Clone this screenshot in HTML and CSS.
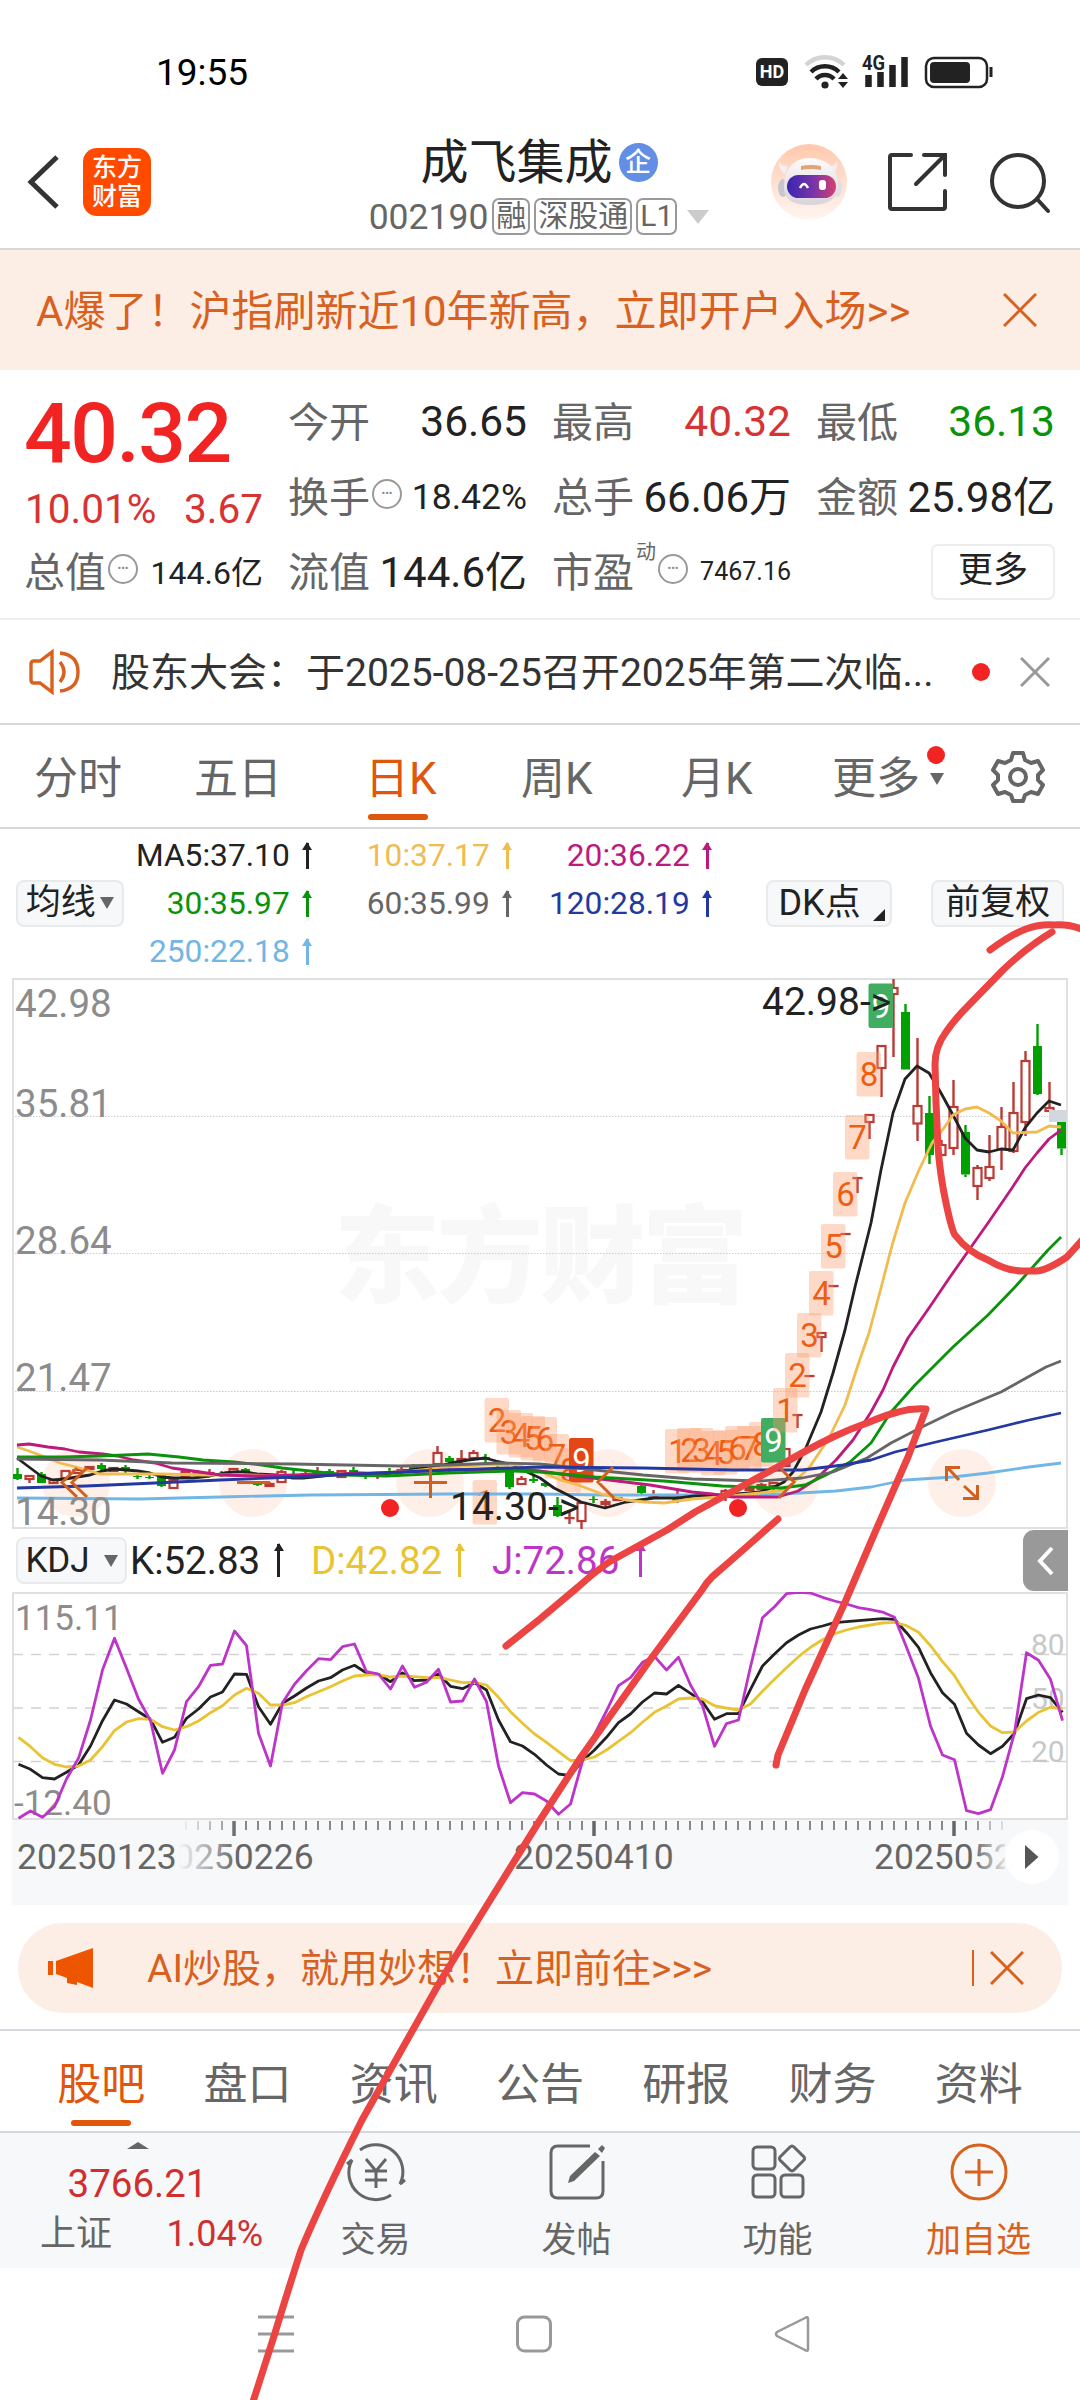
FILE: index.html
```html
<!DOCTYPE html>
<html lang="zh-CN">
<head>
    <meta charset="UTF-8">
    <meta name="viewport" content="width=device-width, initial-scale=1.0">
    <title>成飞集成 002190</title>
    <link rel="stylesheet" href="styles.css">
</head>
<body>
    <div class="phone">
        <div class="status-bar">
            <span class="clock">19:55</span>
            <div class="status-icons">
                <span class="hd">HD</span>
                <svg class="wifi" width="46" height="36" viewBox="0 0 46 36">
                    <g fill="none" stroke-width="4.5">
                        <path d="M2 11a27 27 0 0 1 38 0" stroke="#d4d4d4"/>
                        <path d="M7 18a20 20 0 0 1 28 0" stroke="#222"/>
                        <path d="M12 25a12 12 0 0 1 18 0" stroke="#222"/>
                    </g>
                    <circle cx="21" cy="31" r="3.6" fill="#222"/>
                    <path d="M34 25l5-6 5 6zM34 28h10l-5 6z" fill="#222"/>
                </svg>
                <svg class="signal" width="50" height="36" viewBox="0 0 50 36">
                    <text x="0" y="16" class="net" textLength="23" lengthAdjust="spacingAndGlyphs">4G</text>
                    <path d="M6.500 21v12M18.500 18v15M30.500 11v22M42.500 3v30" stroke="#222" stroke-width="6.500"/>
                </svg>
                <svg width="70" height="34" viewBox="0 0 70 34">
                    <rect x="2" y="3" width="61" height="29" rx="8" fill="none" stroke="#222" stroke-width="2.500"/>
                    <rect x="6" y="7" width="40" height="21" rx="4" fill="#222"/>
                    <path d="M67 12v10" stroke="#222" stroke-width="3"/>
                </svg>
            </div>
        </div>

        <header class="header">
            <svg class="back" width="34" height="56" viewBox="0 0 34 56"><path d="M30 3L4 28l26 25" fill="none" stroke="#333" stroke-width="5"/></svg>
            <div class="logo"><span>东方</span><span>财富</span></div>
            <div class="stock">
                <div class="stock-name">成飞集成<span class="qi">企</span></div>
                <div class="stock-code">002190<span class="tag">融</span><span class="tag">深股通</span><span class="tag">L1</span><i class="caret"></i></div>
            </div>
            <svg class="robot" width="76" height="76" viewBox="0 0 76 76">
                <defs>
                    <linearGradient id="halo" x1="0" y1="0" x2="0" y2="1"><stop offset="0" stop-color="#ffc9ac"/><stop offset="1" stop-color="#fff6f1"/></linearGradient>
                    <linearGradient id="visor" x1="0" y1="0" x2="1" y2="0"><stop offset="0" stop-color="#3a25b0"/><stop offset=".55" stop-color="#7a35a8"/><stop offset="1" stop-color="#d6406d"/></linearGradient>
                    <linearGradient id="shell" x1="0" y1="0" x2="0" y2="1"><stop offset="0" stop-color="#fdfbfb"/><stop offset="1" stop-color="#d9d3da"/></linearGradient>
                </defs>
                <circle cx="38" cy="38" r="38" fill="url(#halo)"/>
                <path d="M8 17q2 6 9 5l-3 8q-7-4-6-13zM66 16q-1 7-8 6l3 8q7-5 5-14z" fill="#f3eef1"/>
                <ellipse cx="12" cy="44" rx="5" ry="9" fill="#c9c5cf"/>
                <ellipse cx="66" cy="44" rx="5" ry="9" fill="#e2dde4"/>
                <path d="M39 14C56 14 68 26 67 43 66 57 54 61 39 61S13 57 13 43C13 25 23 14 39 14z" fill="url(#shell)"/>
                <path d="M30 22q10-2 20 0v4q-10-2-20 0z" fill="#dfa478"/>
                <rect x="16" y="31" width="49" height="23" rx="11.500" fill="url(#visor)"/>
                <path d="M29 44q4-8 8 0" fill="none" stroke="#fff" stroke-width="2.500"/>
                <rect x="48" y="36" width="7" height="10" rx="3" fill="#fff"/>
            </svg>
            <svg class="share" width="64" height="62" viewBox="0 0 64 62"><path d="M25 4H6q-2 0-2 2v50q0 2 2 2h51q2 0 2-2V40M38 4h21v20M58 5L30 33" fill="none" stroke="#333" stroke-width="4" stroke-linecap="round"/></svg>
            <svg class="search" width="64" height="64" viewBox="0 0 64 64"><g fill="none" stroke="#333" stroke-width="4" stroke-linecap="round"><circle cx="30" cy="31" r="26"/><path d="M49 49l11 12"/></g></svg>
        </header>

        <div class="promo">
            <span>A爆了！沪指刷新近10年新高，立即开户入场&gt;&gt;</span>
            <svg width="34" height="34" viewBox="0 0 34 34"><path d="M1 1l32 32M33 1L1 33" stroke="#d8611f" stroke-width="3"/></svg>
        </div>

        <section class="quote">
            <div class="price">
                <div class="last">40.32</div>
                <div class="change"><span>10.01%</span><span>3.67</span></div>
            </div>
            <div class="cell"><label>今开</label><b>36.65</b></div>
            <div class="cell"><label>最高</label><b class="up">40.32</b></div>
            <div class="cell"><label>最低</label><b class="down">36.13</b></div>
            <div class="cell"><label>换手<i class="dots">•••</i></label><b class="mid">18.42%</b></div>
            <div class="cell"><label>总手</label><b class="unit">66.06万</b></div>
            <div class="cell"><label>金额</label><b class="unit">25.98亿</b></div>
            <div class="cell"><label>总值<i class="dots">•••</i></label><b class="unit small">144.6亿</b></div>
            <div class="cell"><label>流值</label><b class="unit">144.6亿</b></div>
            <div class="cell"><label>市盈<sup>动</sup><i class="dots">•••</i></label><b class="tiny">7467.16</b></div>
            <div class="cell cell-end"><span class="more-btn">更多</span></div>
        </section>

        <div class="news">
            <svg class="horn" width="54" height="46" viewBox="0 0 54 46">
                <g fill="none" stroke="#d8611f" stroke-width="3.400">
                    <path d="M24 3v40L12 34H6q-3 0-3-3V15q0-3 3-3h6z"/>
                    <path d="M32 13q8 10 0 20M32 4q18 2 18 19T32 42"/>
                </g>
            </svg>
            <span class="news-text">股东大会：于2025-08-25召开2025年第二次临...</span>
            <i class="red-dot"></i>
            <svg width="30" height="30" viewBox="0 0 30 30"><path d="M1 1l28 28M29 1L1 29" stroke="#999" stroke-width="3"/></svg>
        </div>

        <nav class="periods">
            <span>分时</span>
            <span>五日</span>
            <span class="active">日K</span>
            <span>周K</span>
            <span>月K</span>
            <span class="more">更多<i class="caret-dark"></i><i class="red-dot"></i></span>
            <svg class="gear" width="54" height="54" viewBox="0 0 54 54">
                <g fill="none" stroke="#666" stroke-width="4" stroke-linejoin="round">
                    <path d="M22 3h10l2 7 6 3 7-2 5 9-5 5v5l5 5-5 9-7-2-6 3-2 6H22l-2-6-6-3-7 2-5-9 5-5v-5l-5-5 5-9 7 2 6-3z"/>
                    <circle cx="27" cy="27" r="8"/>
                </g>
            </svg>
        </nav>

        <section class="averages">
            <span class="chip chip-ma">均线<i class="caret-dark"></i></span>
            <div class="ma-grid">
                <span class="ma c5">MA5:37.10<i></i></span>
                <span class="ma c10">10:37.17<i></i></span>
                <span class="ma c20">20:36.22<i></i></span>
                <span class="ma c30">30:35.97<i></i></span>
                <span class="ma c60">60:35.99<i></i></span>
                <span class="ma c120">120:28.19<i></i></span>
                <span class="ma c250">250:22.18<i></i></span>
            </div>
            <span class="chip chip-dk">DK点<i class="corner"></i></span>
            <span class="chip chip-fq">前复权</span>
        </section>

        <svg class="kline" id="kline" width="1080" height="552" viewBox="0 977 1080 552">
            <g class="watermark"><text x="334" y="1294" textLength="414">东方财富</text></g>
            <path class="grid-dots" d="M12 1116.500H1068M12 1253.500H1068M12 1391.500H1068"/>
            <rect class="frame" x="13" y="979" width="1054" height="549"/>
            <g class="tool-circles">
                <circle cx="76" cy="1483" r="34"/><circle cx="253" cy="1483" r="34"/><circle cx="430" cy="1483" r="34"/>
                <circle cx="608" cy="1483" r="34"/><circle cx="785" cy="1483" r="34"/><circle cx="962" cy="1483" r="34"/>
            </g>
            <g id="candles"></g>
            <g id="badges"></g>
            <g id="ma-lines"></g>
            <path class="tool-icons" d="M77 1468L62 1482.500 77 1497M87 1468L72 1482.500 87 1497M237 1482.500H270M414 1482.500H447M430.500 1467V1498M613 1467L598 1482 614 1498M779 1467L794 1482 779 1498M959 1480L947 1467M946.500 1481V1467.500H960M964 1486L977 1498M977.500 1485V1498.500H963"/>
            <circle cx="390" cy="1508" r="9" fill="#f22323"/>
            <circle cx="738" cy="1508" r="9" fill="#f22323"/>
            <g class="axis">
                <text x="15" y="1016.500">42.98</text>
                <text x="15" y="1117">35.81</text>
                <text x="15" y="1254">28.64</text>
                <text x="15" y="1391">21.47</text>
                <text x="15" y="1525">14.30</text>
            </g>
            <g class="mark">
                <text x="762" y="1015">42.98-&gt;</text>
                <text x="450" y="1519.500">14.30-&gt;</text>
            </g>
            <rect x="1049" y="1110" width="18" height="12" fill="#d3d7de"/>
        </svg>

        <div class="kdj-head">
            <span class="chip chip-kdj">KDJ<i class="caret-dark"></i></span>
            <span class="kdj-val k">K:52.83<i></i></span>
            <span class="kdj-val d">D:42.82<i></i></span>
            <span class="kdj-val j">J:72.86<i></i></span>
            <span class="side-tab"><svg width="18" height="30" viewBox="0 0 18 30"><path d="M15 2L3 15l12 13" fill="none" stroke="#fff" stroke-width="4"/></svg></span>
        </div>

        <svg class="kdj" width="1080" height="228" viewBox="0 1592 1080 228">
            <rect class="frame" x="13" y="1593" width="1054" height="226"/>
            <path class="grid-dash" d="M13 1654.500H1067M13 1708H1067M13 1761.500H1067"/>
            <g class="levels">
                <text x="1031" y="1655">80</text>
                <text x="1031" y="1709">50</text>
                <text x="1031" y="1762">20</text>
            </g>
            <g class="kdj-axis">
                <text x="15" y="1630">115.11</text>
                <text x="14" y="1815">-12.40</text>
            </g>
            <g id="kdj-lines"></g>
        </svg>

        <svg class="dates" width="1080" height="85" viewBox="0 1820 1080 85">
            <defs>
                <linearGradient id="fade-l"><stop offset="0" stop-color="#f7f8fa"/><stop offset="1" stop-color="#f7f8fa" stop-opacity="0"/></linearGradient>
                <linearGradient id="fade-r"><stop offset="0" stop-color="#f7f8fa" stop-opacity="0"/><stop offset="1" stop-color="#f7f8fa"/></linearGradient>
            </defs>
            <rect x="12" y="1820" width="1056" height="85" fill="#f7f8fa"/>
            <g id="ticks"></g>
            <g class="date-text">
                <text x="154" y="1869">20250226</text>
                <text x="514" y="1869">20250410</text>
                <text x="874" y="1869">20250522</text>
            </g>
            <rect x="14" y="1820" width="164" height="85" fill="#f7f8fa"/>
            <rect x="178" y="1820" width="60" height="85" fill="url(#fade-l)"/>
            <rect x="972" y="1820" width="40" height="85" fill="url(#fade-r)"/>
            <rect x="1005" y="1820" width="63" height="85" fill="#f7f8fa"/>
            <text class="date-first" x="17" y="1869">20250123</text>
            <circle cx="1032" cy="1857" r="27" fill="#fff"/>
            <path d="M1025 1845l13.500 12-13.500 12z" fill="#555"/>
        </svg>

        <div class="ai-banner">
            <svg width="46" height="42" viewBox="0 0 46 42"><path d="M0 14h5v14H0zM8 14L45 1v40l-16-6v3l-10-2v-5L8 27z" fill="#ee5500"/></svg>
            <span class="ai-text">AI炒股，就用妙想！立即前往&gt;&gt;&gt;</span>
            <i class="bar"></i>
            <svg width="34" height="34" viewBox="0 0 34 34"><path d="M1 1l32 32M33 1L1 33" stroke="#d8611f" stroke-width="3"/></svg>
        </div>

        <nav class="sections">
            <span class="active">股吧</span>
            <span>盘口</span>
            <span>资讯</span>
            <span>公告</span>
            <span>研报</span>
            <span>财务</span>
            <span>资料</span>
        </nav>

        <div class="toolbar">
            <div class="index">
                <i class="caret-up"></i>
                <div class="index-val">3766.21</div>
                <div class="index-row"><span>上证</span><em>1.04%</em></div>
            </div>
            <div class="tool">
                <svg width="62" height="60" viewBox="0 0 62 60">
                    <g fill="none" stroke="#666" stroke-width="3">
                        <path d="M15 8A27 27 0 0 1 55 42l5-4M46 53A27 27 0 0 1 7 18l-5 4"/>
                        <path d="M21 17l10 12 10-12M20 29h22M20 38h22M31 29v17"/>
                    </g>
                </svg>
                <span>交易</span>
            </div>
            <div class="tool">
                <svg width="58" height="60" viewBox="0 0 58 60">
                    <path d="M42 4H10q-7 0-7 7v38q0 7 7 7h38q7 0 7-7V19" fill="none" stroke="#666" stroke-width="3"/>
                    <path d="M47 10l5 4-26 25-6 2 2-7zM50 7l4-4 3 3-3 5z" fill="#666"/>
                </svg>
                <span>发帖</span>
            </div>
            <div class="tool">
                <svg width="56" height="60" viewBox="0 0 56 60">
                    <g fill="none" stroke="#666" stroke-width="3">
                        <rect x="3" y="5" width="22" height="22" rx="4"/>
                        <rect x="3" y="33" width="22" height="22" rx="4"/>
                        <rect x="31" y="33" width="22" height="22" rx="4"/>
                        <path d="M40 5q2-2 4 0l10 10q1 2 0 3L44 28q-2 2-4 0L30 18q-1-2 0-3z"/>
                    </g>
                </svg>
                <span>功能</span>
            </div>
            <div class="tool add">
                <svg width="58" height="60" viewBox="0 0 58 60"><g fill="none" stroke="#d8611f" stroke-width="3"><circle cx="29" cy="30" r="27"/><path d="M15 30h28M29 17v27"/></g></svg>
                <span>加自选</span>
            </div>
        </div>

        <div class="sys-nav">
            <svg width="36" height="38" viewBox="0 0 36 38"><path d="M0 2h36M0 19h36M0 36h36" stroke="#999" stroke-width="3"/></svg>
            <svg width="36" height="38" viewBox="0 0 36 38"><rect x="1.500" y="2" width="33" height="34" rx="7" fill="none" stroke="#999" stroke-width="3"/></svg>
            <svg width="36" height="38" viewBox="0 0 36 38"><path d="M34 4v30q0 3-3 1L3 21q-2-2 0-4L31 3q3-2 3 1z" fill="none" stroke="#999" stroke-width="2.500"/></svg>
        </div>

        <!-- hand-drawn marks on top of the screen -->
        <svg class="scribble" width="1080" height="2400" viewBox="0 0 1080 2400">
            <path d="M990 950Q1012 934 1026 929T1054 925Q1070 924 1084 930"/>
            <path d="M1052 932Q1027 947 1003 970L967 1007Q955 1019 946 1032 935 1047 935 1064L936 1103 938 1147Q940 1175 946 1203T955 1235Q962 1244 970 1250T988 1260Q1006 1271 1022 1271H1036Q1046 1271 1067 1257L1084 1238"/>
            <path d="M506 1646L540 1619 578 1587Q592 1574 609 1562L667 1530 695 1512 781 1465Q808 1449 833 1437 850 1429 867 1423 886 1415 898 1412 912 1408 926 1409L908 1457 876 1530 846 1600 805 1690 778 1755 776 1765"/>
            <path d="M778 1519L743 1550 712 1577Q706 1583 702 1590L650 1660 581 1757 540 1820 484 1910 441 1980 362 2120Q322 2200 301 2250 285 2300 275 2333L251 2408"/>
        </svg>
    </div>
    <script src="script.js"></script>
</body>
</html>
```
FILE: styles.css
```css
* {
    box-sizing: border-box;
}

body {
    margin: 0;
    background: #fff;
    font-family: Roboto, "Noto Sans CJK SC", sans-serif;
    color: #222;
}

i, em, b {
    font-style: normal;
    font-weight: 400;
}

svg {
    display: block;
    flex: none;
}

.phone {
    position: relative;
    width: 1080px;
    height: 2400px;
    overflow: hidden;
    white-space: nowrap;
}

/* status bar */
.status-bar {
    height: 112px;
    padding: 32px 86px 0 156px;
    display: flex;
    justify-content: space-between;
    align-items: center;
}

.clock {
    padding-top: 2px;
    font-size: 37px;
    line-height: 40px;
    color: #000;
}

.status-icons {
    display: flex;
    align-items: center;
    gap: 12px;
}

.hd {
    width: 32px;
    height: 28px;
    margin-right: 4px;
    border-radius: 6px;
    background: #222;
    color: #fff;
    font-size: 18px;
    font-weight: 700;
    line-height: 28px;
    text-align: center;
}

.net {
    font-size: 20px;
    font-weight: 700;
    fill: #222;
}

/* header */
.header {
    height: 138px;
    padding: 4px 28px 0 27px;
    display: flex;
    align-items: center;
    border-bottom: 2px solid #d8d8d8;
}

.logo {
    width: 68px;
    height: 68px;
    margin-left: 22px;
    border-radius: 14px;
    background: #ff4a00;
    color: #fff;
    display: flex;
    flex-direction: column;
    align-items: center;
    justify-content: center;
    font-size: 25px;
    font-weight: 500;
    line-height: 29px;
}

.stock {
    width: 388px;
    margin: 0 auto 0 194px;
    padding-top: 8px;
    display: flex;
    flex-direction: column;
    align-items: center;
    color: #666;
}

.stock-name {
    display: flex;
    align-items: center;
    font-size: 48px;
    line-height: 58px;
    color: #222;
}

.qi {
    width: 39px;
    height: 39px;
    margin-left: 6px;
    border-radius: 50%;
    background: #628fe5;
    color: #fff;
    font-size: 26px;
    font-weight: 500;
    line-height: 38px;
    text-align: center;
}

.stock-code {
    display: flex;
    align-items: center;
    margin-top: 3px;
    font-size: 35.5px;
    line-height: 44px;
}

.tag {
    height: 37px;
    margin-left: 4px;
    padding: 0 2px;
    border: 2px solid #999;
    border-radius: 7px;
    font-size: 30px;
    line-height: 32px;
}

.caret {
    margin-left: 10px;
    border: 11px solid transparent;
    border-top: 14px solid #ccc;
    border-bottom: 0;
}

.share {
    margin-left: 39px;
}

.search {
    margin-left: 38px;
}

/* promo strip */
.promo {
    height: 120px;
    padding: 0 43px 0 36px;
    display: flex;
    align-items: center;
    justify-content: space-between;
    background: #fceee5;
    color: #d8611f;
    font-size: 42px;
}

.promo span {
    padding-bottom: 5px;
}

/* quote block */
.quote {
    height: 250px;
    padding: 14px 25px 0;
    display: grid;
    grid-template-columns: repeat(4, 238px);
    grid-template-rows: repeat(3, 75px);
    column-gap: 26px;
    border-bottom: 2px solid #eceef0;
}

.price {
    grid-row: span 2;
    color: #f22323;
}

.last {
    margin-left: -1px;
    font-size: 84px;
    font-weight: 500;
    line-height: 100px;
    letter-spacing: -1.5px;
}

.change {
    display: flex;
    justify-content: space-between;
    font-size: 40.5px;
    line-height: 50px;
    color: #d63333;
}

.cell {
    display: flex;
    align-items: center;
    justify-content: space-between;
}

.cell-end {
    justify-content: flex-end;
}

.cell label {
    display: flex;
    align-items: center;
    margin: -6px 0 0 -1px;
    font-size: 41px;
    color: #666;
}

.cell b {
    font-size: 42.5px;
    color: #222;
}

.cell .mid {
    font-size: 35.5px;
}

.cell .unit {
    margin-top: -6px;
    font-size: 42px;
}

.cell .small {
    margin-top: -4px;
    font-size: 32px;
}

.cell .tiny {
    font-size: 25px;
}

.cell .up {
    color: #d63333;
}

.cell .down {
    color: #0a930a;
}

.cell sup {
    align-self: flex-start;
    margin: 1px 0 0 2px;
    font-size: 20px;
    line-height: 24px;
}

.dots {
    width: 30px;
    height: 30px;
    margin: 0 0 0 2px;
    border: 2px solid #999;
    border-radius: 50%;
    font-size: 11px;
    line-height: 26px;
    text-align: center;
    color: #888;
}

.more-btn {
    width: 124px;
    height: 56px;
    border: 2px solid #ebedee;
    border-radius: 7px;
    font-size: 35px;
    line-height: 50px;
    text-align: center;
}

/* news line */
.news {
    height: 105px;
    padding: 0 30px 0 28px;
    display: flex;
    align-items: center;
    border-bottom: 2px solid #d8d8d8;
}

.news-text {
    flex: 1;
    margin-left: 29px;
    padding-bottom: 5px;
    font-size: 39px;
    color: #333;
}

.red-dot {
    width: 18px;
    height: 18px;
    border-radius: 50%;
    background: #f22323;
}

.news .red-dot {
    margin-right: 30px;
}

/* period tabs */
.periods {
    height: 104px;
    padding: 6px 35px 0 34px;
    display: grid;
    grid-template-columns: 160px 171px 156px 160px 151px 1fr 54px;
    align-items: center;
    justify-items: start;
    border-bottom: 2px solid #d8d8d8;
    font-size: 44px;
    line-height: 96px;
    color: #666;
}

.periods span,
.sections span {
    position: relative;
}

.periods .active,
.sections .active {
    color: #e0560c;
}

.periods .active::after,
.sections .active::after {
    content: "";
    position: absolute;
    left: 50%;
    bottom: 7px;
    width: 60px;
    height: 6px;
    margin-left: -33px;
    border-radius: 3px;
    background: #e0560c;
}

.gear {
    margin-top: -5px;
}

.caret-dark {
    display: inline-block;
    border: 7px solid transparent;
    border-top: 12px solid #666;
    border-bottom: 0;
}

.periods .more {
    display: flex;
    align-items: center;
}

.periods .more .caret-dark {
    margin-left: 10px;
}

.periods .more .red-dot {
    position: absolute;
    right: -1px;
    top: 15px;
}

/* moving averages */
.averages {
    height: 148px;
    padding: 0 16px;
    display: flex;
    align-items: center;
}

.chip {
    height: 47px;
    display: flex;
    align-items: center;
    justify-content: center;
    border: 2px solid #e8eaec;
    border-radius: 8px;
    background: #f7f8fa;
    font-size: 35px;
    line-height: 40px;
}

.chip-ma {
    width: 108px;
}

.chip-ma .caret-dark {
    margin-left: 4px;
}

.chip-dk {
    width: 127px;
    margin-left: 51px;
    font-size: 36px;
}

.chip-fq {
    width: 133px;
    margin-left: 39px;
}

.corner {
    align-self: flex-end;
    margin: 0 -5px 4px 12px;
    border-left: 12px solid transparent;
    border-bottom: 12px solid #222;
}

.ma-grid {
    padding-top: 2px;
    display: grid;
    grid-template-columns: 189px 200px 200px;
    grid-template-rows: repeat(3, 48px);
    justify-items: end;
    align-items: center;
    margin-right: 2px;
    font-size: 31.7px;
}

.ma {
    display: flex;
    align-items: center;
    line-height: 48px;
}

.ma i,
.kdj-val i {
    position: relative;
    width: 3px;
    height: 26px;
    margin: 0 4px 0 16px;
    background: currentColor;
}

.ma i::before,
.kdj-val i::before {
    content: "";
    position: absolute;
    left: -3.5px;
    top: -1px;
    border: 5px solid transparent;
    border-top: 0;
    border-bottom: 8px solid currentColor;
}

.c5 { color: #222; }
.c10 { color: #f0bc50; }
.c20 { color: #bd1a7d; }
.c30 { color: #0a930a; }
.c60 { color: #666; }
.c120 { color: #2338a0; }
.c250 { color: #71b6e5; }

/* charts */
.frame {
    fill: none;
    stroke: #e0e0e0;
    stroke-width: 2;
}

.grid-dots {
    fill: none;
    stroke: #ccc;
    stroke-width: 1;
    stroke-dasharray: 1.5 1.5;
}

.grid-dash {
    fill: none;
    stroke: #d2d2d2;
    stroke-width: 1.3;
    stroke-dasharray: 10 8;
}

.watermark {
    font-size: 106px;
    font-weight: 900;
    fill: #f8f8f8;
}

.tool-circles {
    fill: #fef0e9;
}

.tool-icons {
    fill: none;
    stroke: #d05f20;
    stroke-width: 3;
}

.axis {
    font-size: 38.5px;
    fill: #8c8c8c;
}

.mark {
    font-size: 39px;
    fill: #222;
}

.kdj-axis {
    font-size: 35px;
    fill: #8c8c8c;
}

.levels {
    font-size: 30px;
    fill: #c8c8c8;
}

.wick-up { stroke: #bc3934; stroke-width: 2.4; }
.wick-down { stroke: #00a000; stroke-width: 2.4; }
.body-up { fill: #fff; stroke: #bc3934; stroke-width: 2.2; }
.body-down { fill: #00a000; }

.line {
    fill: none;
    stroke: currentColor;
    stroke-width: 2.8;
    stroke-linejoin: round;
}

.badge-bg { fill: #fd9a6d; fill-opacity: .38; }
.badge-hot { fill: #e34716; }
.badge-cool { fill: #40ad61; }

.badge-num {
    font-size: 33px;
    text-anchor: middle;
    fill: #ee5e12;
}

.badge-solid {
    fill: #fff;
}

.kdj-head {
    height: 63px;
    padding-left: 16px;
    display: flex;
    align-items: center;
}

.chip-kdj {
    width: 111px;
}

.chip-kdj .caret-dark {
    margin-left: 14px;
}

.kdj-val {
    width: 181px;
    padding-left: 3px;
    display: flex;
    align-items: center;
    font-size: 38.5px;
    line-height: 50px;
}

.kdj-val i {
    height: 33px;
    margin-left: auto;
    margin-right: 28px;
}

.k { color: #222; }
.d { color: #e9c331; }
.j { color: #bd35c8; }

.side-tab {
    width: 45px;
    height: 61px;
    margin: 0 12px 0 auto;
    display: flex;
    align-items: center;
    justify-content: center;
    border-radius: 11px 0 0 11px;
    background: #999;
}

.tick { stroke: #888; stroke-width: 2; }
.tick-big { stroke: #666; stroke-width: 3.5; }

.date-text,
.date-first {
    font-size: 35.5px;
    fill: #666;
}

/* AI banner */
.ai-banner {
    height: 90px;
    margin: 18px 18px 0;
    padding: 0 38px 0 30px;
    display: flex;
    align-items: center;
    border-radius: 45px;
    background: #fceee5;
    color: #d8611f;
}

.ai-text {
    flex: 1;
    margin-left: 53px;
    padding-bottom: 6px;
    font-size: 39px;
}

.bar {
    width: 2px;
    height: 36px;
    margin-right: 16px;
    background: #d8611f;
}

/* lower tabs */
.sections {
    height: 104px;
    margin-top: 16px;
    padding: 0 28px;
    display: grid;
    grid-template-columns: repeat(7, 1fr);
    border-top: 2px solid #d4d8dc;
    border-bottom: 2px solid #d4d8dc;
    font-size: 44px;
    line-height: 109px;
    text-align: center;
    color: #666;
}

.sections .active::after {
    bottom: 14px;
    margin-left: -30px;
}

/* bottom toolbar */
.toolbar {
    height: 135px;
    display: flex;
    background: #f7f8fa;
}

.index {
    width: 275px;
    display: flex;
    flex-direction: column;
    align-items: center;
    color: #d12f2f;
}

.caret-up {
    margin-top: 9px;
    border: 11px solid transparent;
    border-top: 0;
    border-bottom: 7px solid #666;
}

.index-val {
    margin-top: 13px;
    font-size: 38.5px;
    line-height: 44px;
}

.index-row {
    align-self: stretch;
    display: flex;
    justify-content: space-between;
    padding: 2px 12px 0 40px;
    font-size: 36px;
    line-height: 52px;
}

.index-row span {
    color: #666;
}

.tool {
    width: 201px;
    padding-top: 9px;
    display: flex;
    flex-direction: column;
    align-items: center;
    font-size: 35px;
    line-height: 52px;
    color: #666;
}

.tool span {
    margin-top: 13px;
}

.add {
    color: #d8611f;
}

/* system navigation */
.sys-nav {
    height: 132px;
    padding: 0 270px 0 258px;
    display: flex;
    align-items: center;
    justify-content: space-between;
}

.scribble {
    position: absolute;
    left: 0;
    top: 0;
    fill: none;
    stroke: #eb4442;
    stroke-width: 7;
    stroke-linecap: round;
    stroke-linejoin: round;
    pointer-events: none;
}
```
FILE: script.js
```js
const NS = 'http://www.w3.org/2000/svg';

const add = (parentId, tag, attrs, text) => {
    const el = document.createElementNS(NS, tag);
    Object.keys(attrs).forEach(k => el.setAttribute(k, attrs[k]));
    if (text) el.textContent = text;
    document.getElementById(parentId).appendChild(el);
};

const FIRST_X = 17.5;
const STEP = 12;
const barX = i => FIRST_X + i * STEP;

// bar index, direction (1 up, 0 down), body top, body bottom, high, low
const candles = [
    [0, 0, 1474, 1479, 1468, 1480], [1, 1, 1476, 1479, 1476, 1483], [2, 0, 1474, 1483, 1472, 1483],
    [3, 1, 1480, 1483, 1480, 1484], [4, 1, 1471, 1478, 1471, 1478], [5, 1, 1470, 1473, 1467, 1474],
    [6, 1, 1467, 1469, 1467, 1470], [7, 0, 1465, 1469, 1463, 1471], [8, 1, 1468, 1471, 1468, 1472],
    [9, 0, 1467, 1471, 1465, 1473], [10, 0, 1476, 1477, 1474, 1479], [11, 0, 1477, 1478, 1475, 1479],
    [12, 0, 1475, 1486, 1475, 1487], [13, 1, 1480, 1488, 1479, 1489], [14, 1, 1472, 1476, 1470, 1478],
    [15, 1, 1472, 1474, 1470, 1476], [16, 1, 1473, 1475, 1469, 1476], [17, 0, 1473, 1475, 1471, 1477],
    [18, 1, 1469, 1472, 1468, 1473], [19, 0, 1469, 1472, 1468, 1474], [20, 0, 1484, 1485, 1482, 1486],
    [21, 1, 1484, 1486, 1482, 1487], [22, 1, 1472, 1482, 1470, 1483], [23, 0, 1474, 1475, 1470, 1477],
    [24, 1, 1474, 1476, 1472, 1478], [25, 1, 1473, 1475, 1467, 1476], [26, 0, 1471, 1474, 1469, 1476],
    [27, 1, 1471, 1477, 1470, 1477], [28, 0, 1470, 1473, 1467, 1475], [29, 0, 1475, 1477, 1472, 1479],
    [30, 1, 1474, 1475, 1472, 1479], [31, 0, 1472, 1474, 1468, 1476], [32, 1, 1470, 1472, 1467, 1474],
    [33, 0, 1466, 1471, 1464, 1473], [34, 1, 1466, 1469, 1464, 1471], [35, 1, 1453, 1464, 1446, 1466],
    [36, 0, 1458, 1462, 1456, 1473], [37, 1, 1459, 1461, 1450, 1463], [38, 1, 1453, 1458, 1450, 1460],
    [39, 0, 1457, 1460, 1454, 1463], [40, 0, 1463, 1466, 1461, 1469], [41, 0, 1472, 1487, 1470, 1489],
    [42, 1, 1479, 1484, 1476, 1484], [43, 0, 1479, 1481, 1476, 1483], [44, 0, 1483, 1486, 1481, 1487],
    [45, 0, 1505, 1516, 1497, 1517], [46, 1, 1518, 1518, 1512, 1524], [47, 1, 1503, 1521, 1503, 1529],
    [48, 0, 1499, 1500, 1496, 1503], [49, 1, 1502, 1504, 1499, 1507], [50, 1, 1498, 1500, 1497, 1501],
    [52, 0, 1486, 1493, 1485, 1495], [53, 1, 1497, 1498, 1490, 1499], [55, 1, 1499, 1500, 1491, 1503],
    [59, 1, 1491, 1494, 1489, 1501], [61, 1, 1488, 1490, 1486, 1491], [62, 1, 1485, 1489, 1483, 1491],
    [63, 1, 1483, 1486, 1482, 1490], [64, 1, 1449, 1466, 1449, 1466], [65, 1, 1415, 1415, 1415, 1428],
    [66, 1, 1376, 1376, 1376, 1376], [67, 1, 1333, 1337, 1333, 1352], [68, 1, 1286, 1286, 1286, 1286],
    [69, 1, 1234, 1234, 1234, 1234], [70, 1, 1178, 1178, 1178, 1193], [71, 1, 1115, 1122, 1115, 1139],
    [72, 1, 1046, 1068, 1046, 1097], [73, 1, 988, 994, 979, 1057], [74, 0, 1012, 1069.5, 1004, 1069],
    [75, 1, 1106, 1123.5, 1038, 1141], [76, 0, 1113, 1155, 1096, 1164], [77, 1, 1145, 1155, 1140, 1156],
    [78, 1, 1107, 1148, 1080, 1155], [79, 0, 1132, 1174.5, 1125, 1177], [80, 1, 1168, 1186, 1165, 1200],
    [81, 1, 1167, 1178, 1135, 1181], [82, 1, 1127, 1149, 1107, 1170], [83, 1, 1113, 1151, 1082, 1153],
    [84, 1, 1061, 1122, 1051, 1136], [85, 0, 1046, 1094, 1024, 1095], [86, 1, 1108, 1111, 1082, 1111],
    [87, 0, 1122, 1148.5, 1122, 1155]
];

candles.forEach(([i, up, top, bottom, high, low]) => {
    const x = barX(i);
    const kind = up ? 'up' : 'down';
    if (high < top) add('candles', 'path', { class: 'wick-' + kind, d: `M${x} ${high}V${top}` });
    if (low > bottom) add('candles', 'path', { class: 'wick-' + kind, d: `M${x} ${bottom}V${low}` });
    const pad = up ? 4 : 4.5;
    add('candles', 'rect', { class: 'body-' + kind, x: x - pad, y: top, width: pad * 2, height: Math.max(bottom - top, 0.1) });
});

// label, left, top, style
const badges = [
    [1, 472.5, 1480], [2, 484.5, 1398], [3, 496.5, 1410], [4, 508.5, 1413], [5, 520.5, 1416],
    [6, 532.5, 1417], [7, 544.5, 1434], [8, 556.5, 1448], [9, 569, 1438, 'hot'],
    [1, 665, 1429], [2, 677, 1428], [3, 689, 1428], [4, 701, 1431], [5, 713, 1430],
    [6, 725, 1426], [7, 737, 1426], [8, 749, 1422], [9, 761, 1418, 'cool'],
    [1, 773, 1388], [2, 785, 1353], [3, 797, 1313], [4, 809, 1271], [5, 821, 1224],
    [6, 833, 1172], [7, 845, 1115], [8, 856.5, 1052], [9, 868.5, 983.5, 'cool']
];

badges.forEach(([n, x, y, style]) => {
    add('badges', 'rect', { class: 'badge-' + (style || 'bg'), x, y, width: 24.5, height: 44.5, rx: 2 });
    add('badges', 'text', { class: 'badge-num' + (style ? ' badge-solid' : ''), x: x + 12.5, y: y + 34 }, String(n));
});

const averages = {
    c250: '17,1498 140,1499 220,1497 310,1495 450,1494 540,1494 605,1495 760,1495 800,1493 836,1491 871,1487 905,1480 953,1477 988,1473 1029,1467 1061,1463',
    c5: '17,1458 29,1467 41,1476 53,1480 65,1479 77,1477 90,1475 102,1471 114,1469 126,1470 138,1471 150,1473 162,1477 174,1478 193,1478 210,1476 224,1473 234,1472 246,1472 257,1474 275,1475 293,1478 303,1478 313,1477 331,1475 358,1473 382,1474 399,1472 417,1469 434,1467 451,1463 468,1460 485,1458 496,1461 513,1465 527,1472 540,1478 554,1488 568,1495 581,1502 605,1508 626,1502 654,1498 678,1498 695,1496 726,1495 760,1492 774,1487 784,1482 793,1472 805,1450 821,1412 833,1373 845,1330 855,1287 863,1255 871,1223 881,1170 893,1113 905,1079 917,1066 929,1073 941,1093 953,1115 965,1138 977,1150 989,1152 1001,1149 1013,1150 1025,1128 1037,1113 1049,1101 1061,1105',
    c10: '17,1447 29,1451 45,1457 60,1463 76,1467 100,1474 127,1474 162,1474 203,1475 248,1475 293,1476 317,1475 358,1474 413,1471 448,1467 482,1465 516,1465 540,1471 560,1480 578,1485 602,1494 626,1500 645,1502 664,1503 692,1499 719,1497 760,1493 785,1490 796,1480 809,1468 829,1438 845,1405 858,1365 869,1333 881,1288 889,1257 893,1242 905,1203 919,1170 932,1143 941,1132 953,1115 965,1109 977,1107 989,1113 1001,1121 1013,1133 1037,1132 1049,1126 1061,1127',
    c20: '17,1445 29,1444 48,1447 65,1449 79,1452 103,1454 117,1456 134,1460 155,1463 172,1468 193,1471 220,1475 255,1476 293,1475 379,1473 448,1470 516,1469 540,1471 568,1475 609,1480 650,1485 692,1492 712,1494 733,1497 778,1497 798,1491 815,1480 836,1460 853,1440 871,1412 883,1390 893,1367 908,1338 929,1308 950,1277 969,1250 988,1223 1012,1188 1025,1168 1037,1153 1049,1139 1061,1130',
    c30: '17,1457 62,1457 100,1456 148,1454 179,1457 203,1460 234,1462 262,1465 282,1468 310,1471 344,1475 386,1476 448,1473 513,1471 540,1472 595,1477 664,1481 722,1486 781,1488 805,1485 826,1475 850,1462 871,1443 891,1412 915,1385 953,1347 988,1315 1015,1287 1048,1250 1061,1237',
    c60: '17,1459 100,1460 172,1463 293,1464 400,1466 448,1465 500,1463 540,1464 595,1470 643,1475 692,1479 760,1481 802,1478 833,1472 867,1458 891,1443 922,1427 953,1412 1001,1392 1046,1367 1061,1361',
    c120: '17,1488 86,1486 155,1483 220,1480 296,1477 379,1473 448,1470 540,1467 643,1468 733,1470 802,1470 843,1465 871,1460 895,1452 936,1442 988,1430 1029,1420 1061,1413'
};

Object.keys(averages).forEach(c => add('ma-lines', 'polyline', { class: 'line ' + c, points: averages[c] }));

// one sample per bar, measured down from y=1530 with three units to a pixel
const kdj = {
    k: [703,718,743,747,727,705,648,572,510,522,545,568,637,622,565,537,501,486,432,433,530,583,520,498,474,453,443,420,406,429,433,455,429,452,450,432,469,476,458,480,570,635,648,673,705,732,737,692,660,622,578,552,516,489,492,466,490,515,568,551,551,478,408,372,338,315,297,288,278,275,272,269,266,268,308,352,428,488,523,610,645,671,649,610,506,495,503,547],
    d: [622,650,683,703,711,708,690,650,602,576,566,568,590,600,590,573,548,527,495,475,490,525,525,518,500,485,470,453,438,435,434,441,438,440,443,442,450,458,457,465,502,545,580,612,637,665,692,690,681,660,634,608,577,547,528,507,504,507,527,534,540,522,484,448,413,380,352,329,311,300,291,285,279,277,287,307,347,395,437,495,547,588,608,606,573,547,532,537],
    j: [865,843,862,830,747,685,570,420,325,415,507,572,730,660,515,470,406,402,303,347,610,708,518,463,422,386,389,350,342,425,432,477,408,472,457,418,516,513,447,515,708,818,788,792,813,853,822,693,613,543,467,443,397,379,420,382,465,527,649,581,570,410,263,230,191,187,189,202,213,222,233,239,246,262,352,445,588,675,689,842,851,839,740,608,368,391,448,572]
};

['k', 'd', 'j'].forEach(c => {
    const points = kdj[c].map((v, i) => `${(18.5 + i * STEP).toFixed(1)},${(1530 + v / 3).toFixed(1)}`).join(' ');
    add('kdj-lines', 'polyline', { class: 'line ' + c, points });
});

for (let x = 186; x <= 1002; x += STEP) {
    const big = (x - 234) % 360 === 0;
    add('ticks', 'path', { class: big ? 'tick-big' : 'tick', d: `M${x} 1821V${big ? 1836 : 1830}` });
}
```
